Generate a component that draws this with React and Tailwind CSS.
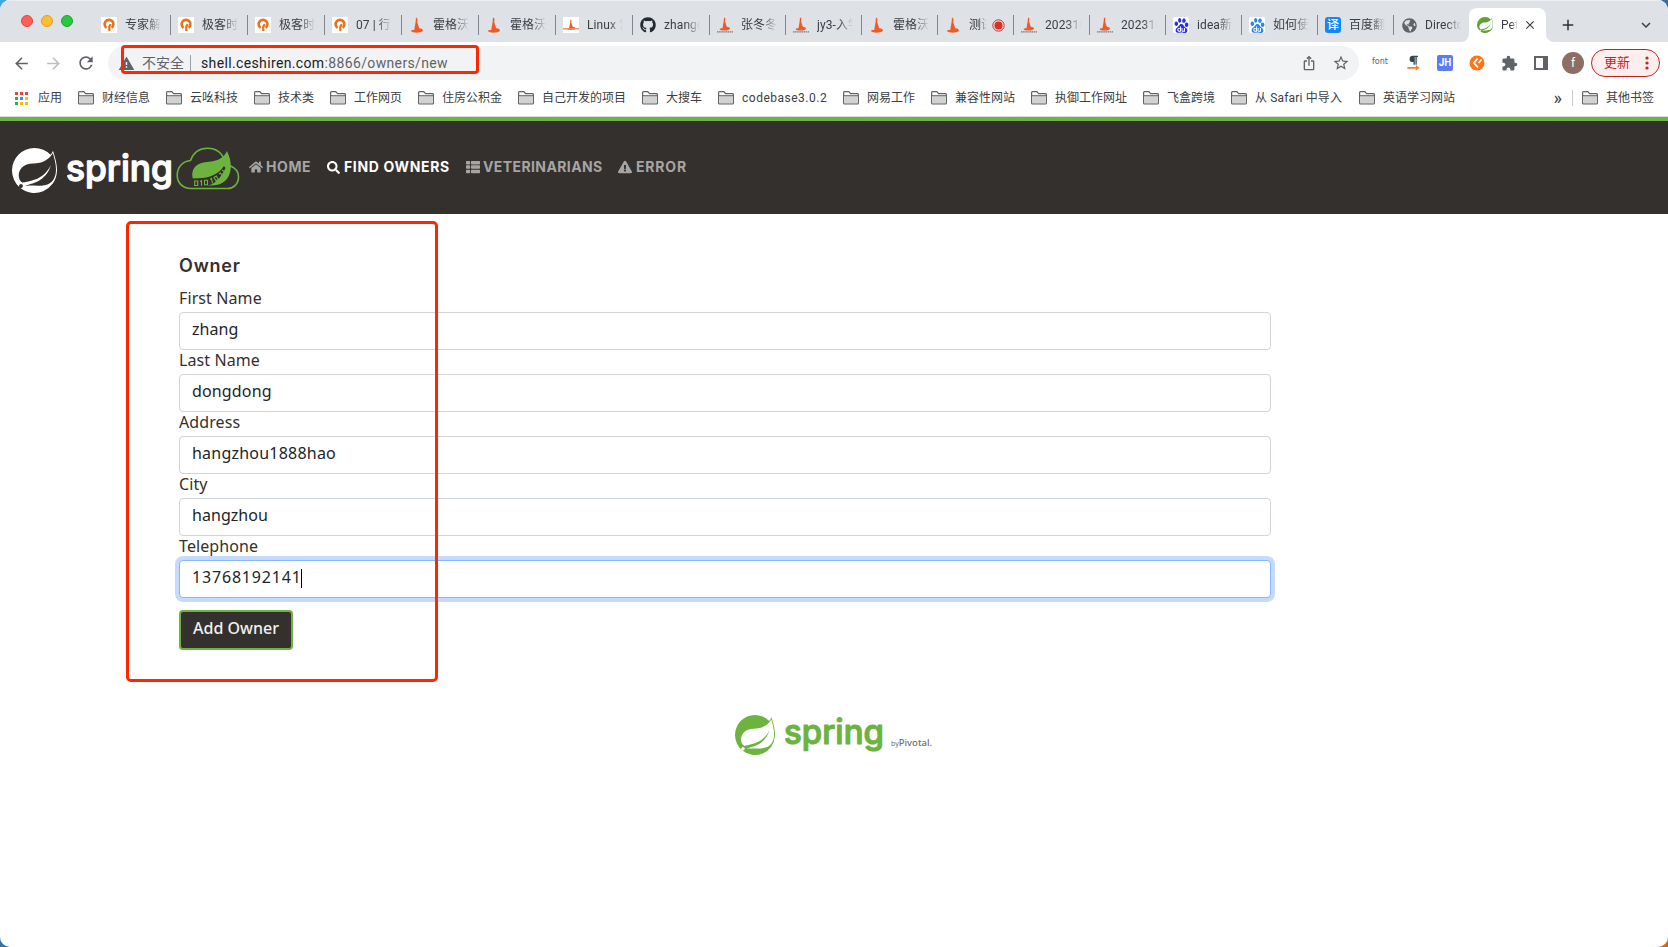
import React from "react";
import { SiSpring, SiBaidu } from "react-icons/si";
import { FaHome, FaSearch, FaThList, FaExclamationTriangle, FaGithub, FaGlobeAmericas, FaParagraph } from "react-icons/fa";
import { MdArrowBack, MdArrowForward, MdRefresh, MdExtension, MdStarBorder, MdIosShare, MdWarning, MdClose, MdAdd, MdExpandMore } from "react-icons/md";

const Geek = () => (
  <span className="flex h-4 w-4 items-center justify-center bg-white">
    <svg width="16" height="16" viewBox="0 0 16 16" fill="none" stroke="#e8731a">
      <path d="M5.600 10.900A4.400 4.400 0 1 1 10.600 10.800" strokeWidth="2.600" />
      <path d="M8.300 14V9.600L9.800 7.200" strokeWidth="2.200" />
    </svg>
  </span>
);

const Hat = ({ white, caption }) => (
  <span className={white ? "block h-4 w-4 bg-white" : "block h-4 w-4"}>
    <svg width="16" height="16" viewBox="0 0 16 16">
      <g transform={white ? "translate(2.5 2) scale(.7)" : caption ? "translate(1 0) scale(.86)" : ""} fill="#f05a28">
        <path d="M7 .2L8.6 2l-.4 3 2 6.2c2.600.4 3.800 1.200 3.800 2.100 0 1.300-2.800 2.400-6.200 2.400-3.600 0-5.800-.8-5.800-1.600 0-.7 1.400-1.100 3.200-1L6.600 5z" />
      </g>
      {white && <path d="M0 11.800h16" stroke="#f2895f" strokeWidth="1.400" />}
      {caption && <path d="M0 14.900h16" stroke="#777" strokeWidth="1.200" strokeDasharray="1.500 .6" />}
    </svg>
  </span>
);

const Baidu = ({ color }) => (
  <span className="flex h-4 w-4 items-center justify-center rounded-[2px] bg-white">
    <SiBaidu size={15} color={color} />
  </span>
);

const tabs = [
  [<Geek />, "专家解"],
  [<Geek />, "极客时"],
  [<Geek />, "极客时"],
  [<Geek />, "07 | 行"],
  [<Hat />, "霍格沃"],
  [<Hat />, "霍格沃"],
  [<Hat white />, "Linux 常"],
  [<FaGithub size={16} color="#24292f" />, "zhango"],
  [<Hat caption />, "张冬冬"],
  [<Hat caption />, "jy3-入学"],
  [<Hat />, "霍格沃"],
  [<Hat />, "测试", true],
  [<Hat caption />, "202310"],
  [<Hat caption />, "202310"],
  [<Baidu color="#2932e1" />, "idea新"],
  [<Baidu color="#2a84f5" />, "如何使"],
  [<span className="flex h-4 w-4 items-center justify-center rounded-[3px] bg-[#1487f5] text-[12px] font-medium text-white">译</span>, "百度翻"],
  [<FaGlobeAmericas size={15} color="#5f6368" />, "Directo"],
];

const Tab = ({ icon, text, rec, narrow, last }) => (
  <div className={(narrow ? "w-[76px]" : "w-[77px]") + " flex shrink-0 items-center"}>
    <div className="ml-[7px] flex w-4 shrink-0 justify-center">{icon}</div>
    <div className={(rec ? "w-[18px]" : "w-9") + " ml-2 shrink-0 overflow-hidden whitespace-nowrap text-[12px] leading-4 tracking-[0.1px] text-[#3c4043] [mask-image:linear-gradient(to_right,black_60%,transparent)]"}>{text}</div>
    {rec && (
      <svg className="ml-[5px] shrink-0" width="13" height="13" viewBox="0 0 13 13">
        <circle cx="6.500" cy="6.500" r="5.700" fill="none" stroke="#d93025" strokeWidth="1" />
        <circle cx="6.500" cy="6.500" r="4" fill="#d93025" />
      </svg>
    )}
    {!last && <div className="ml-auto h-5 w-px shrink-0 bg-[#80868b]" />}
  </div>
);

const Folder = () => (
  <svg className="shrink-0" width="16" height="14" viewBox="0 0 16 14">
    <path d="M.6 12V1.600Q.6.7 1.500.7H5.800L7.600 2.700H14.500Q15.400 2.700 15.400 3.600V12Q15.400 12.900 14.500 12.900H1.500Q.6 12.900.6 12Z" fill="#fff" stroke="#5f6368" strokeWidth="1.200" />
    <path d="M1.200 5h13.600v7.300H1.200z" fill="#d2d2d2" />
    <path d="M1 4.700h14" stroke="#5f6368" strokeWidth="1" />
  </svg>
);

const bookmarks = [
  ["财经信息", "w-12"],
  ["云吆科技", "w-12"],
  ["技术类", "w-9"],
  ["工作网页", "w-12"],
  ["住房公积金", "w-[60px]"],
  ["自己开发的项目", "w-[84px]"],
  ["大搜车", "w-9"],
  ["codebase3.0.2", "w-[85px] tracking-[0.5px]"],
  ["网易工作", "w-12"],
  ["兼容性网站", "w-[60px]"],
  ["执御工作网址", "w-[72px]"],
  ["飞盒跨境", "w-12"],
  ["从 Safari 中导入", "w-[88px] tracking-[0.15px]"],
  ["英语学习网站", "w-[72px]"],
];

const dots = ["#ea4335", "#ea4335", "#ea4335", "#34a853", "#4285f4", "#fbbc05", "#34a853", "#fbbc05", "#fbbc05"];

const fields = [
  ["First Name", "zhang", "tracking-[0.05px]"],
  ["Last Name", "dongdong", "tracking-[0.15px]"],
  ["Address", "hangzhou1888hao", "tracking-[0.22px]"],
  ["City", "hangzhou", "tracking-[0.05px]"],
  ["Telephone", "13768192141", "tracking-[0.82px]"],
];

const SpringWord = ({ color, width, height }) => (
  <svg width={width} height={height} viewBox="0 0 104 46" preserveAspectRatio="none">
    <text x="-1" y="34" textLength="106" lengthAdjust="spacingAndGlyphs" fontFamily="Inter, sans-serif" fontSize="37" fontWeight="500" fill={color} stroke={color} strokeWidth="1.300" strokeLinejoin="round">spring</text>
  </svg>
);

const CloudLeaf = () => (
  <svg width="64" height="44" viewBox="0 0 64 44">
    <path d="M15 41.500C6.500 41.500 1.200 35.500 1.200 28.300 1.200 20 7 14 14.500 13.500 17.500 5.500 24 1.300 31.500 1.300 40 1.300 46 6 48.500 13.500 50.500 17 52 18 54.500 19 59.500 21 62.500 25 62.500 30 62.500 37 57.500 41.500 51.500 41.500Z" fill="none" stroke="#6db33f" strokeWidth="1.600" />
    <path d="M51 4C56.500 15 56 27 50 33 45 38 38 39 29 38.500L17 32C15 26 17 19 24 16.500 33 13.500 45 16.500 51 4Z" fill="#6db33f" />
    <path d="M16 31.500C32 31.500 41 29 48 19L49.500 21C45 31 39 37.500 29 39.500L17 39.500Z" fill="#34302d" />
    <path d="M18.700 34h3v4.500h-3zM24 34.500l1.500-.8v5M28.500 33.200h3v4.500h-3zM34 32.400l1.500-1 1 5M38 30.500l2.300-1.500 2 3.300-2.300 1.700zM43 27l1.400-1 1.800 2.500M46 23l2 1.500" fill="none" stroke="#6db33f" strokeWidth="1.100" />
  </svg>
);

const NavItem = ({ icon, label, active, cls }) => (
  <div className={(active ? "text-white" : "text-[#a7a5a3]") + " flex items-center " + cls}>
    {icon}
    <span className="whitespace-nowrap">{label}</span>
  </div>
);

export default function App() {
  return (
    <div className="h-[947px] w-[1668px] overflow-hidden bg-[linear-gradient(135deg,#45a5e2_0%,#2f6da8_40%,#2f6da8_60%,#c8681c_95%)] font-['Roboto','Noto_Sans_CJK_SC',sans-serif]">
      <div className="relative flex h-full w-full flex-col overflow-hidden rounded-[10px] bg-white">
        <div className="flex h-[42px] shrink-0 border-t border-[#eceef0] bg-[#dee1e6]">
          <div className="flex w-[94px] shrink-0 gap-2 pl-[21px] pt-[14px]">
            <span className="h-3 w-3 rounded-full border border-[#e2463f] bg-[#ff5f57]" />
            <span className="h-3 w-3 rounded-full border border-[#e1a116] bg-[#febc2e]" />
            <span className="h-3 w-3 rounded-full border border-[#12ac28] bg-[#28c840]" />
          </div>
          <div className="flex pt-[7px]">
            {tabs.map(([icon, text, rec], i) => (
              <Tab key={i} icon={icon} text={text} rec={rec} narrow={i > 7} last={i === 17} />
            ))}
          </div>
          <div className="relative -ml-px mt-[7px] flex w-[77px] shrink-0 items-center rounded-t-[8px] bg-white">
            <svg className="absolute -left-2 bottom-0" width="8" height="8"><path d="M8 0V8H0A8 8 0 0 0 8 0Z" fill="#fff" /></svg>
            <svg className="absolute -right-2 bottom-0" width="8" height="8"><path d="M0 0V8H8A8 8 0 0 1 0 0Z" fill="#fff" /></svg>
            <SiSpring className="ml-2" size={16} color="#5fa134" />
            <div className="ml-2 w-[17px] overflow-hidden whitespace-nowrap text-[12px] leading-4 text-[#3c4043] [mask-image:linear-gradient(to_right,black_60%,transparent)]">PetC</div>
            <MdClose className="ml-[5px]" size={14} color="#3c4043" />
          </div>
          <div className="flex flex-1 items-center justify-between pl-[13px] pr-[13px] pt-[7px]">
            <MdAdd size={18} color="#303236" />
            <MdExpandMore size={18} color="#3c4043" />
          </div>
        </div>

        <div className="flex h-[42px] shrink-0 items-center pl-[12px] text-[#5f6368]">
          <MdArrowBack size={19} />
          <MdArrowForward className="ml-[13px]" size={19} color="#bcbec1" />
          <MdRefresh className="ml-[13px]" size={20} />
          <div className="ml-[12px] flex h-[34px] w-[1251px] items-center rounded-full bg-[#f1f3f4] pl-[10px] pr-[9px]">
            <MdWarning size={17} />
            <span className="ml-[7px] text-[14px] leading-5">不安全</span>
            <span className="ml-[6px] h-4 w-px bg-[#9aa0a6]" />
            <span className="ml-[10px] text-[14px] leading-5 tracking-[0.36px]"><span className="text-[#202124]">shell.ceshiren.com</span>:8866/owners/new</span>
            <MdIosShare className="ml-auto" size={16} />
            <MdStarBorder className="ml-[15px]" size={18} />
          </div>
          <span className="ml-[13px] w-[17px] font-['DejaVu_Sans'] text-[8px] leading-3 pb-[2px]">font</span>
          <div className="ml-[17px] flex h-4 w-[15px] flex-col items-center">
            <FaParagraph size={11} color="#37474f" />
            <svg width="15" height="6" viewBox="0 0 15 6"><path d="M1 2h9V0l4 3-4 3V4H1z" fill="#f58220" /></svg>
          </div>
          <span className="ml-[16px] flex h-4 w-4 items-center justify-center rounded-[2px] bg-[#5c7cf0] text-[10px] font-bold leading-4 text-white">JH</span>
          <svg className="ml-4" width="16" height="16" viewBox="0 0 16 16"><circle cx="8" cy="8" r="7.500" fill="#ff7416" /><path d="M8.500 3.500L5 8l4 4.500M9.500 8l3-3.500" fill="none" stroke="#fff" strokeWidth="1.800" /></svg>
          <MdExtension className="ml-[16px]" size={17} />
          <svg className="ml-[16px]" width="14" height="14" viewBox="0 0 14 14"><path d="M1 1h12v12H1z" fill="none" stroke="#5f6368" strokeWidth="2" /><path d="M9 1h4v12H9z" fill="#5f6368" /></svg>
          <span className="ml-[14px] flex h-[22px] w-[22px] items-center justify-center rounded-full bg-[#8d6e63] text-[12px] text-white">f</span>
          <span className="ml-[7px] flex h-7 w-[69px] items-center rounded-full border border-[#c5221f] bg-[#fbeeec] pl-[12px] text-[13px] text-[#c5221f]">
            更新
            <svg className="ml-[15px]" width="4" height="14" viewBox="0 0 4 14" fill="#c5221f"><circle cx="2" cy="2" r="1.600" /><circle cx="2" cy="7" r="1.600" /><circle cx="2" cy="12" r="1.600" /></svg>
          </span>
        </div>

        <div className="flex h-8 shrink-0 items-center pb-1 pl-[15px] text-[12px] leading-4 text-[#3c4043]">
          <div className="grid shrink-0 grid-cols-3 gap-[2px]">
            {dots.map((c, i) => <span key={i} className="h-[3px] w-[3px]" style={{ background: c }} />)}
          </div>
          <span className="ml-[10px] mr-4 w-6 whitespace-nowrap">应用</span>
          {bookmarks.map(([t, w]) => (
            <div key={t} className="mr-4 flex shrink-0 items-center gap-2">
              <Folder />
              <span className={"whitespace-nowrap " + w}>{t}</span>
            </div>
          ))}
          <span className="ml-auto text-[18px] leading-4">»</span>
          <span className="ml-[10px] h-4 w-px bg-[#c8cacd]" />
          <div className="ml-[9px] mr-[14px] flex items-center gap-2"><Folder /><span className="w-12 whitespace-nowrap">其他书签</span></div>
        </div>

        <div className="h-px shrink-0 bg-[#dadce0]" />
        <div className="flex h-[97px] shrink-0 border-t-4 border-[#6db33f] bg-[#34302d] pl-3">
          <SiSpring className="mt-[27px] shrink-0" size={45} color="#fff" />
          <div className="ml-[10px] mt-[26px] shrink-0"><SpringWord color="#fff" width={105} height={46} /></div>
          <div className="ml-[4px] mt-[26px] shrink-0"><CloudLeaf /></div>
          <div className="mt-[36px] flex h-5 font-['Inter'] text-[14px] font-bold leading-5">
            <NavItem cls="ml-[9px] w-[78px] gap-[3px] tracking-[0.6px]" icon={<FaHome size={14} />} label="HOME" />
            <NavItem cls="w-[139px] gap-[4px] tracking-[0.65px]" icon={<FaSearch size={13} />} label="FIND OWNERS" active />
            <NavItem cls="w-[152px] gap-[3px] tracking-[0.4px]" icon={<FaThList size={14} />} label="VETERINARIANS" />
            <NavItem cls="gap-[4px] tracking-[0.8px]" icon={<FaExclamationTriangle size={14} />} label="ERROR" />
          </div>
        </div>

        <div className="ml-[179px] flex w-[1092px] flex-col font-['Noto_Sans'] text-[16px] text-[#34302d]">
          <h2 className="mt-[40px] h-[34px] font-['Inter'] text-[18px] font-semibold leading-[24px] tracking-[0.8px]">Owner</h2>
          {fields.map(([label, value, cls], i) => (
            <label key={label} className="block">
              <span className="block h-6 leading-5 tracking-[0.1px]">{label}</span>
              <span className={(i === 4 ? "border-[#86b7fe] ring-4 ring-[#c6dafe]" : "border-[#ced4da]") + " flex h-[38px] items-center rounded-[4px] border bg-white pb-1 pl-3 text-[#212529]"}>
                <span className={cls}>{value}</span>
                {i === 4 && <span className="-ml-px mt-[3px] h-[19px] w-px bg-black" />}
              </span>
            </label>
          ))}
          <button className="mt-[12px] flex h-10 w-[114px] items-center justify-center rounded-[4px] border-2 border-[#6db33f] bg-[#34302d] pb-1 font-medium text-[#f1f1f1]">Add Owner</button>
        </div>

        <div className="mt-[65px] flex h-10 pl-[735px]">
          <SiSpring size={40} color="#6db33f" />
          <div className="ml-[10px] -mt-[3px] h-10"><SpringWord color="#6db33f" width={98} height={43} /></div>
          <div className="ml-[8px] mt-[17px] whitespace-nowrap font-['Noto_Sans'] leading-4 text-[#6d6e71]"><span className="text-[7px]">by</span><span className="text-[9.5px] font-medium">Pivotal.</span></div>
        </div>

        <div className="absolute left-[121px] top-[45px] h-[29px] w-[358px] rounded-[4px] border-3 border-[#ff2600]" />
        <div className="absolute left-[126px] top-[221px] h-[461px] w-[312px] rounded-[5px] border-3 border-[#ff2600]" />
      </div>
    </div>
  );
}
